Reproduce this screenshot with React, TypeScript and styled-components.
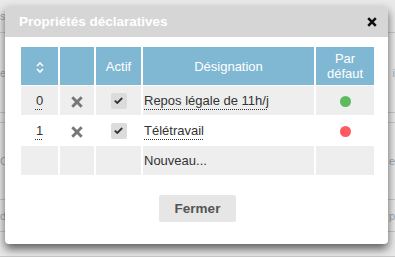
import React from "react";
import styled, { createGlobalStyle } from "styled-components";

const Global = createGlobalStyle`
  html, body { margin: 0; padding: 0; }
  body {
    width: 395px; height: 257px; overflow: hidden;
    font-family: "Liberation Sans", Arial, sans-serif;
    background: #e9e9e9;
  }
`;

const Page = styled.div`
  position: relative;
  width: 395px;
  height: 257px;
  overflow: hidden;
  background: #e9e9e9;
`;

const BackRow = styled.div<{ $h: number }>`
  height: ${(p) => p.$h}px;
  border-bottom: 1px solid #c9c9c9;
  display: flex;
  align-items: center;
  justify-content: space-between;
  font-size: 11px;
  color: #a8a8a8;
  box-sizing: border-box;
`;

const BackText = styled.span`
  margin: 0;
`;

const Dialog = styled.div`
  position: absolute;
  left: 5px;
  top: 6px;
  width: 383px;
  height: 238px;
  background: #fff;
  border-radius: 4px;
  box-shadow: 0 5px 10px rgba(0, 0, 0, 0.6);
  overflow: hidden;
  display: flex;
  flex-direction: column;
`;

const Header = styled.div`
  height: 31px;
  background: #d6d6d6;
  display: flex;
  align-items: center;
  justify-content: space-between;
  padding: 0 11px 0 14px;
  flex-shrink: 0;
`;

const Title = styled.div`
  color: #fff;
  font-weight: bold;
  font-size: 13.5px;
`;

const CloseBtn = styled.button`
  border: 0;
  background: none;
  padding: 0;
  width: 10px;
  height: 10px;
  display: flex;
  cursor: pointer;
`;

const Body = styled.div`
  padding: 10px 14px 0 16px;
  display: flex;
  flex-direction: column;
  align-items: center;
`;

const Table = styled.table`
  width: 353px;
  table-layout: fixed;
  border-collapse: separate;
  border-spacing: 0;
  font-size: 13px;
  color: #333;
`;

const Th = styled.th<{ $last?: boolean }>`
  background: #80b8d3;
  color: #fff;
  font-weight: normal;
  height: 38px;
  padding: 0;
  line-height: 15px;
  text-align: center;
  border-bottom: 1px solid #fff;
  border-right: ${(p) => (p.$last ? "0" : "2px solid #fff")};
`;

const Tr = styled.tr<{ $alt?: boolean }>`
  background: ${(p) => (p.$alt ? "#eeeeee" : "#ffffff")};
`;

const Td = styled.td<{ $align?: string; $last?: boolean }>`
  height: 29px;
  padding: 0 1px;
  text-align: ${(p) => p.$align || "center"};
  vertical-align: middle;
  border-bottom: 1px solid #fff;
  border-right: ${(p) => (p.$last ? "0" : "2px solid #fff")};
`;

const Dotted = styled.span`
  text-decoration: underline dotted #333;
  text-underline-offset: 4px;
  text-decoration-thickness: 1px;
`;

const Check = styled.span`
  display: inline-flex;
  align-items: center;
  justify-content: center;
  width: 16px;
  height: 16px;
  background: #dcdcdc;
  border-radius: 2px;
  vertical-align: middle;
`;

const Dot = styled.span<{ $color: string }>`
  display: inline-block;
  width: 11px;
  height: 11px;
  border-radius: 50%;
  background: ${(p) => p.$color};
  vertical-align: middle;
`;

const IconWrap = styled.span`
  display: inline-flex;
  vertical-align: middle;
`;

const Button = styled.button`
  margin-top: 19px;
  width: 77px;
  height: 27px;
  border: 0;
  border-radius: 2px;
  background: #e6e6e6;
  color: #555;
  font-family: "Liberation Sans", Arial, sans-serif;
  font-weight: bold;
  font-size: 13.5px;
  cursor: pointer;
`;

const SortIcon = () => (
  <svg width="8" height="11" viewBox="0 0 8 11">
    <path d="M1 4 L4 1 L7 4 M1 7 L4 10 L7 7" stroke="#fff" strokeWidth="1.6" fill="none" />
  </svg>
);

const Cross = () => (
  <svg width="12" height="12" viewBox="0 0 12 12">
    <path d="M1.3 1.3 L10.7 10.7 M10.7 1.3 L1.3 10.7" stroke="#777" strokeWidth="2.9" />
  </svg>
);

const CheckMark = () => (
  <svg width="9" height="7" viewBox="0 0 9 7">
    <path d="M0.8 3.6 L3.3 6 L8.2 1" stroke="#333" strokeWidth="1.8" fill="none" />
  </svg>
);

const rows = [
  { n: "0", label: "Repos légale de 11h/j", color: "#5cbb5c" },
  { n: "1", label: "Télétravail", color: "#ff5a5f" },
];

export default function App() {
  return (
    <Page>
      <Global />
      <BackRow $h={33}><BackText>s</BackText><BackText /></BackRow>
      <BackRow $h={80}><BackText>e</BackText><BackText>i</BackText></BackRow>
      <BackRow $h={10} />
      <BackRow $h={77}><BackText>C</BackText><BackText>e</BackText></BackRow>
      <BackRow $h={32}><BackText>d</BackText><BackText>p</BackText></BackRow>
      <BackRow $h={25} />
      <Dialog>
        <Header>
          <Title>Propriétés déclaratives</Title>
          <CloseBtn aria-label="Fermer">
            <svg width="10" height="10" viewBox="0 0 10 10">
              <path d="M1.2 1.2 L8.8 8.8 M8.8 1.2 L1.2 8.8" stroke="#111" strokeWidth="2.6" />
            </svg>
          </CloseBtn>
        </Header>
        <Body>
          <Table>
            <colgroup>
              <col style={{ width: 39 }} />
              <col style={{ width: 36 }} />
              <col style={{ width: 47 }} />
              <col style={{ width: 173 }} />
              <col style={{ width: 58 }} />
            </colgroup>
            <thead>
              <tr>
                <Th><IconWrap><SortIcon /></IconWrap></Th>
                <Th />
                <Th>Actif</Th>
                <Th>Désignation</Th>
                <Th $last>Par<br />défaut</Th>
              </tr>
            </thead>
            <tbody>
              {rows.map((r, i) => (
                <Tr key={r.n} $alt={i % 2 === 0}>
                  <Td><Dotted>{r.n}</Dotted></Td>
                  <Td><IconWrap><Cross /></IconWrap></Td>
                  <Td><Check><CheckMark /></Check></Td>
                  <Td $align="left"><Dotted>{r.label}</Dotted></Td>
                  <Td $last><Dot $color={r.color} /></Td>
                </Tr>
              ))}
              <Tr $alt>
                <Td />
                <Td />
                <Td />
                <Td $align="left">Nouveau...</Td>
                <Td $last />
              </Tr>
            </tbody>
          </Table>
          <Button>Fermer</Button>
        </Body>
      </Dialog>
    </Page>
  );
}
